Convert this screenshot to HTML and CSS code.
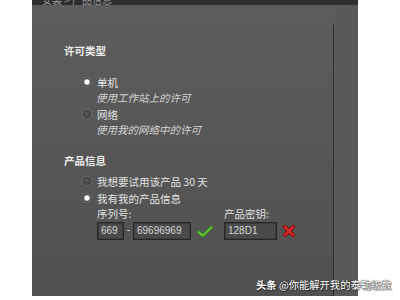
FILE: index.html
```html
<!DOCTYPE html>
<html lang="zh-CN">
<head>
  <meta charset="UTF-8" />
  <title>产品信息</title>
  <link rel="stylesheet" href="styles.css">
</head>
<body>

<div class="window">
  <div class="titlebar">安装 &gt; 产品信息</div>
  <div class="body">
    <div class="content">
      <h3 class="section first">许可类型</h3>

      <div class="option">
        <span class="radio checked"></span>
        <div>
          <div class="opt-title">单机</div>
          <div class="opt-desc"><span>使用工作站上的许可</span></div>
        </div>
      </div>
      <div class="option">
        <span class="radio"></span>
        <div>
          <div class="opt-title">网络</div>
          <div class="opt-desc"><span>使用我的网络中的许可</span></div>
        </div>
      </div>

      <h3 class="section second">产品信息</h3>

      <div class="option">
        <span class="radio"></span>
        <div class="opt-title">我想要试用该产品 30 天</div>
      </div>
      <div class="option">
        <span class="radio checked"></span>
        <div class="opt-title">我有我的产品信息</div>
      </div>

      <div class="fields">
        <div class="field">
          <div class="field-label">序列号:</div>
          <div class="field-row">
            <span class="box short">669</span>
            <span class="dash">-</span>
            <span class="box long">69696969</span>
            <svg class="mark" width="16" height="13" viewBox="0 0 15 12">
              <path d="M1.5 6.5 L5.5 10 L13.5 2" fill="none" stroke="#2f8a1e" stroke-width="3.2" stroke-linecap="round" stroke-linejoin="round"/>
              <path d="M1.5 6.5 L5.5 10 L13.5 2" fill="none" stroke="#6cc83a" stroke-width="1.6" stroke-linecap="round" stroke-linejoin="round"/>
            </svg>
          </div>
        </div>
        <div class="field">
          <div class="field-label">产品密钥:</div>
          <div class="field-row">
            <span class="box key">128D1</span>
            <svg class="mark cross" width="12" height="12" viewBox="0 0 12 12">
              <path d="M2 2 L10 10 M10 2 L2 10" stroke="#8e1010" stroke-width="4" stroke-linecap="round"/>
              <path d="M2 2 L10 10 M10 2 L2 10" stroke="#d8282a" stroke-width="2.2" stroke-linecap="round"/>
            </svg>
          </div>
        </div>
      </div>
    </div>
    <div class="divider"></div>
    <div class="gutter"></div>
  </div>
</div>

<div class="watermark"><b>头条</b> @你能解开我的泰勒级数</div>

</body>
</html>
```

FILE: styles.css
```css
* { margin: 0; padding: 0; box-sizing: border-box; }
body {
  background: #fff;
  font-family: "Noto Sans CJK SC", "Liberation Sans", sans-serif;
  width: 400px;
  height: 300px;
  overflow: hidden;
  position: relative;
}
.window {
  margin-left: 32px;
  width: 326px;
  height: 296px;
  display: flex;
  flex-direction: column;
  background: linear-gradient(180deg, #5d5d5d, #505050);
}
.titlebar {
  height: 5px;
  background: #2e2e2e;
  color: #999;
  font-size: 10px;
  line-height: 0;
  padding-left: 10px;
  overflow: hidden;
}
.body {
  flex: 1;
  display: flex;
}
.content {
  flex: 1;
  padding-left: 32px;
}
.divider {
  width: 2px;
  margin-top: 20px;
  background: #2a2a2a;
  border-right: 1px solid #5e5e5e;
}
.gutter {
  width: 23px;
  background: #595959;
}
.section {
  font-size: 10.5px;
  font-weight: bold;
  color: #ececec;
  line-height: 14px;
}
.section.first { margin-top: 39px; margin-bottom: 17px; }
.section.second { margin-top: 17px; margin-bottom: 6px; }
.option {
  display: flex;
  align-items: flex-start;
  margin-left: 19px;
  margin-bottom: 2px;
}
.radio {
  width: 8px;
  height: 8px;
  border-radius: 50%;
  margin: 3px 6px 0 0;
  background: radial-gradient(circle at 50% 40%, #5a5a5a, #444);
  border: 1px solid #3a3a3a;
  box-shadow: 0 0 0 1px #6a6a6a;
  flex: none;
}
.radio.checked {
  background: radial-gradient(circle, #fff 0, #fff 2px, #cfcfcf 3px, #8a8a8a 4px);
  border-color: #444;
}
.opt-title {
  font-size: 10.5px;
  line-height: 15px;
  color: #e4e4e4;
  white-space: nowrap;
}
.opt-desc {
  font-size: 10.5px;
  line-height: 15px;
  color: #d4d4d4;
  white-space: nowrap;
}
.opt-desc span {
  display: inline-block;
  transform: skewX(-14deg);
}
.fields {
  display: flex;
  margin-left: 33px;
  margin-top: -2px;
}
.field-label {
  font-size: 10.5px;
  line-height: 15px;
  color: #e0e0e0;
  margin-bottom: 1px;
}
.field-row {
  display: flex;
  align-items: center;
}
.field:first-child { width: 127px; }
.box {
  height: 18px;
  border: 1px solid #262626;
  box-shadow: inset 0 0 0 1px #3c3c3c;
  background: #4a4a4a;
  color: #d6d6d6;
  font-family: "Liberation Sans", sans-serif;
  font-size: 10px;
  line-height: 16px;
  padding-left: 3px;
}
.box.short { width: 27px; }
.box.long { width: 58px; }
.box.key { width: 53px; }
.dash {
  color: #ddd;
  font-family: "Liberation Sans", sans-serif;
  font-size: 10px;
  line-height: 10px;
  width: 9px;
  margin-top: -3px;
  text-align: center;
}
.mark { margin-left: 6px; }
.mark.cross { margin-left: 6px; }
.watermark {
  position: absolute;
  left: 256px;
  top: 277px;
  font-size: 10.3px;
  line-height: 16px;
  white-space: nowrap;
  color: #fff;
  text-shadow: 0 0 1px #333, 0 0 1px #333, 1px 1px 1px rgba(0,0,0,0.5);
}
```
